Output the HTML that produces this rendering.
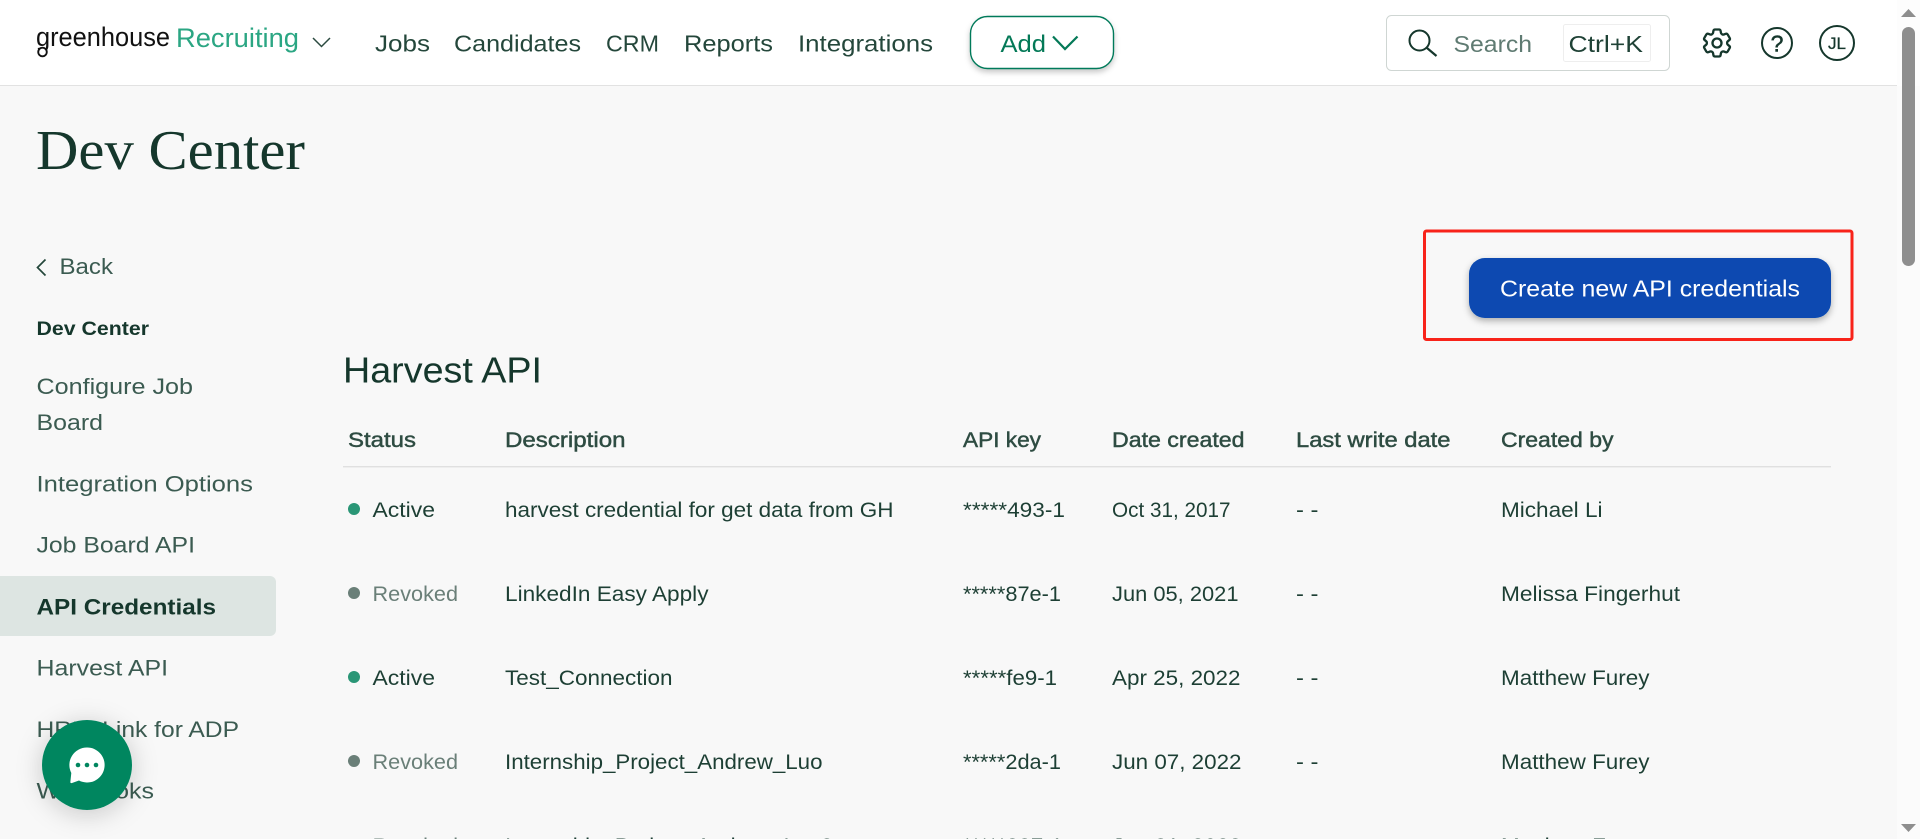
<!DOCTYPE html>
<html lang="en">
<head>
<meta charset="utf-8">
<title>Dev Center - API Credentials</title>
<style>
html,body{margin:0;padding:0;background:#f8f8f8;width:1920px;height:839px;overflow:hidden}
svg{display:block;position:absolute;left:0;top:0}
text{font-family:"Liberation Sans",sans-serif;white-space:pre}
.nav{font-size:23px;fill:#24473b}
.side{font-size:22.5px;fill:#3b5b51}
.sb{font-size:22px;fill:#15372c;font-weight:bold}
.th{font-size:21px;fill:#2e4c42;stroke:#2e4c42;stroke-width:.45px}
.td{font-size:21px;fill:#1d3f34}
.rev{font-size:21px;fill:#6a7f78}
</style>
</head>
<body>
<svg width="1920" height="839" viewBox="0 0 1920 839" xmlns="http://www.w3.org/2000/svg">
<defs>
<filter id="s1" x="-20%" y="-30%" width="140%" height="170%"><feDropShadow dx="0" dy="3" stdDeviation="3" flood-color="#000" flood-opacity=".22"/></filter>
<filter id="s2" x="-20%" y="-40%" width="140%" height="190%"><feDropShadow dx="0" dy="3" stdDeviation="3.5" flood-color="#000" flood-opacity=".3"/></filter>
<filter id="s3" x="-60%" y="-60%" width="220%" height="220%"><feDropShadow dx="0" dy="4" stdDeviation="13" flood-color="#000" flood-opacity=".2"/></filter>
</defs>

<!-- page + header -->
<rect width="1920" height="839" fill="#f8f8f8"/>
<rect width="1897" height="85" fill="#fff"/>
<rect y="85" width="1897" height="1" fill="#e2e2e2"/>

<!-- scrollbar -->
<rect x="1897" width="23" height="839" fill="#fbfbfb"/>
<rect x="1897" width="23" height="86" fill="#fdfdfd"/>
<path d="M1908.5 9 L1916 17 L1901 17 Z" fill="#8e8e8e"/>
<rect x="1902" y="27" width="13" height="239" rx="6.5" fill="#8e8e8e"/>
<path d="M1901 824 L1916 824 L1908.5 832 Z" fill="#8e8e8e"/>

<!-- logo -->
<text x="36" y="46" font-size="27" fill="#111" textLength="134" lengthAdjust="spacingAndGlyphs">greenhouse</text>
<circle cx="42.5" cy="52" r="4.3" fill="#fff" stroke="#111" stroke-width="1.9"/>
<text x="176" y="47" font-size="27" fill="#2ba683" textLength="123" lengthAdjust="spacingAndGlyphs">Recruiting</text>
<path d="M313 38 L321.5 46.5 L330 38" fill="none" stroke="#2b4a40" stroke-width="1.5"/>

<!-- nav -->
<text class="nav" x="375" y="51.5" textLength="55" lengthAdjust="spacingAndGlyphs">Jobs</text>
<text class="nav" x="454" y="51.5" textLength="127" lengthAdjust="spacingAndGlyphs">Candidates</text>
<text class="nav" x="606" y="51.5" textLength="53" lengthAdjust="spacingAndGlyphs">CRM</text>
<text class="nav" x="684" y="51.5" textLength="89" lengthAdjust="spacingAndGlyphs">Reports</text>
<text class="nav" x="798" y="51.5" textLength="135" lengthAdjust="spacingAndGlyphs">Integrations</text>

<!-- add -->
<rect x="970.5" y="16.5" width="143" height="52" rx="17" fill="#fff" stroke="#067a5a" stroke-width="1.4" filter="url(#s1)"/>
<text x="1000.5" y="52" font-size="24" fill="#047957" textLength="45.5" lengthAdjust="spacingAndGlyphs">Add</text>
<path d="M1053 36.5 L1065 49 L1077.5 36.5" fill="none" stroke="#047957" stroke-width="2.2"/>

<!-- search -->
<rect x="1386.5" y="15.5" width="283" height="55" rx="5" fill="#fff" stroke="#cfd6d3" stroke-width="1"/>
<circle cx="1419.5" cy="40.5" r="10" fill="none" stroke="#15372c" stroke-width="2"/>
<path d="M1427 48 L1436.5 56" fill="none" stroke="#15372c" stroke-width="2.2"/>
<text x="1453.5" y="52" font-size="23" fill="#5f7b72" textLength="78.5" lengthAdjust="spacingAndGlyphs">Search</text>
<rect x="1563.5" y="24.5" width="87" height="37" rx="2" fill="#fff" stroke="#eeeeee"/>
<text x="1568.5" y="52" font-size="23" fill="#1f4236" textLength="74.5" lengthAdjust="spacingAndGlyphs">Ctrl+K</text>

<!-- gear -->
<g transform="translate(1699 25) scale(1.5)" fill="none" stroke="#15372c" stroke-width="1.55">
<path d="M9.594 3.94c.09-.542.56-.94 1.11-.94h2.593c.55 0 1.02.398 1.11.94l.213 1.281c.063.374.313.686.645.87.074.04.147.083.22.127.325.196.72.257 1.075.124l1.217-.456a1.125 1.125 0 0 1 1.37.49l1.296 2.247a1.125 1.125 0 0 1-.26 1.431l-1.003.827c-.293.241-.438.613-.43.992a7.723 7.723 0 0 1 0 .255c-.008.378.137.75.43.991l1.004.827c.424.35.534.955.26 1.43l-1.298 2.247a1.125 1.125 0 0 1-1.369.491l-1.217-.456c-.355-.133-.75-.072-1.076.124a6.47 6.47 0 0 1-.22.128c-.331.183-.581.495-.644.869l-.213 1.281c-.09.543-.56.94-1.11.94h-2.594c-.55 0-1.019-.398-1.11-.94l-.213-1.281c-.062-.374-.312-.686-.644-.87a6.52 6.52 0 0 1-.22-.127c-.325-.196-.72-.257-1.076-.124l-1.217.456a1.125 1.125 0 0 1-1.369-.49l-1.297-2.247a1.125 1.125 0 0 1 .26-1.431l1.004-.827c.292-.24.437-.613.43-.991a6.932 6.932 0 0 1 0-.255c.007-.38-.138-.751-.43-.992l-1.004-.827a1.125 1.125 0 0 1-.26-1.43l1.297-2.247a1.125 1.125 0 0 1 1.37-.491l1.216.456c.356.133.751.072 1.076-.124.072-.044.146-.086.22-.128.332-.183.582-.495.644-.869l.214-1.28Z"/>
<circle cx="12" cy="12" r="3"/>
</g>

<!-- help -->
<circle cx="1777" cy="43" r="15" fill="none" stroke="#15372c" stroke-width="2"/>
<text x="1777" y="51.5" font-size="23" fill="#15372c" stroke="#15372c" stroke-width=".5" text-anchor="middle">?</text>

<!-- avatar -->
<circle cx="1837" cy="43" r="17" fill="none" stroke="#15372c" stroke-width="2"/>
<text x="1828" y="49" font-size="17" fill="#15372c" stroke="#15372c" stroke-width=".3" textLength="18" lengthAdjust="spacingAndGlyphs">JL</text>

<!-- title -->
<text x="36" y="169" font-size="56" fill="#15372c" textLength="269" lengthAdjust="spacingAndGlyphs" style="font-family:'Liberation Serif',serif">Dev Center</text>

<!-- sidebar -->
<path d="M45.5 259.5 L37.5 267.5 L45.5 275.5" fill="none" stroke="#24473b" stroke-width="1.7"/>
<text class="side" x="59.5" y="274" textLength="53.5" lengthAdjust="spacingAndGlyphs">Back</text>
<text class="sb" x="36.5" y="335" style="font-size:19px" textLength="112.5" lengthAdjust="spacingAndGlyphs">Dev Center</text>
<text class="side" x="36.5" y="394" textLength="156.5" lengthAdjust="spacingAndGlyphs">Configure Job</text>
<text class="side" x="36.5" y="430" textLength="66.5" lengthAdjust="spacingAndGlyphs">Board</text>
<text class="side" x="36.5" y="491.5" textLength="216.5" lengthAdjust="spacingAndGlyphs">Integration Options</text>
<text class="side" x="36.5" y="552.5" textLength="158.5" lengthAdjust="spacingAndGlyphs">Job Board API</text>
<path d="M0 576 H270 a6 6 0 0 1 6 6 V630 a6 6 0 0 1 -6 6 H0 Z" fill="#dde5e2"/>
<text class="sb" x="36.5" y="614.5" textLength="179.5" lengthAdjust="spacingAndGlyphs">API Credentials</text>
<text class="side" x="36.5" y="675.5" textLength="131.5" lengthAdjust="spacingAndGlyphs">Harvest API</text>
<text class="side" x="36.5" y="737" textLength="202.5" lengthAdjust="spacingAndGlyphs">HRIS Link for ADP</text>
<text class="side" x="36.5" y="798.5" textLength="117.5" lengthAdjust="spacingAndGlyphs">Webhooks</text>

<!-- CTA + annotation -->
<rect x="1469" y="258" width="362" height="60" rx="16" fill="#0749b1" filter="url(#s2)"/>
<text x="1500" y="296.5" font-size="23" fill="#fff" textLength="300" lengthAdjust="spacingAndGlyphs">Create new API credentials</text>
<rect x="1424.5" y="231" width="427.5" height="108.5" rx="2" fill="none" stroke="#f8231a" stroke-width="3"/>

<!-- heading -->
<text x="343" y="382.5" font-size="36" fill="#15372c" textLength="199" lengthAdjust="spacingAndGlyphs">Harvest API</text>

<!-- table head -->
<text class="th" x="348" y="447" textLength="68" lengthAdjust="spacingAndGlyphs">Status</text>
<text class="th" x="505" y="447" textLength="120.5" lengthAdjust="spacingAndGlyphs">Description</text>
<text class="th" x="963" y="447" textLength="78" lengthAdjust="spacingAndGlyphs">API key</text>
<text class="th" x="1112" y="447" textLength="132.5" lengthAdjust="spacingAndGlyphs">Date created</text>
<text class="th" x="1296" y="447" textLength="154.5" lengthAdjust="spacingAndGlyphs">Last write date</text>
<text class="th" x="1501" y="447" textLength="112.5" lengthAdjust="spacingAndGlyphs">Created by</text>
<rect x="343" y="466" width="1488" height="1.4" fill="#e0e0e0"/>

<!-- row 1 -->
<circle cx="354" cy="509" r="6" fill="#2a9676"/>
<text class="td" x="372.5" y="517" textLength="62.5" lengthAdjust="spacingAndGlyphs">Active</text>
<text class="td" x="505" y="517" textLength="388.5" lengthAdjust="spacingAndGlyphs">harvest credential for get data from GH</text>
<text class="td" x="963" y="517" textLength="102" lengthAdjust="spacingAndGlyphs">*****493-1</text>
<text class="td" x="1112" y="517" textLength="118.5" lengthAdjust="spacingAndGlyphs">Oct 31, 2017</text>
<text class="td" x="1296" y="517" textLength="22.5" lengthAdjust="spacingAndGlyphs">- -</text>
<text class="td" x="1501" y="517" textLength="101.5" lengthAdjust="spacingAndGlyphs">Michael Li</text>

<!-- row 2 -->
<circle cx="354" cy="593" r="6" fill="#6a7f78"/>
<text class="rev" x="372.5" y="601" textLength="85.5" lengthAdjust="spacingAndGlyphs">Revoked</text>
<text class="td" x="505" y="601" textLength="203.5" lengthAdjust="spacingAndGlyphs">LinkedIn Easy Apply</text>
<text class="td" x="963" y="601" textLength="98" lengthAdjust="spacingAndGlyphs">*****87e-1</text>
<text class="td" x="1112" y="601" textLength="126.5" lengthAdjust="spacingAndGlyphs">Jun 05, 2021</text>
<text class="td" x="1296" y="601" textLength="22.5" lengthAdjust="spacingAndGlyphs">- -</text>
<text class="td" x="1501" y="601" textLength="179" lengthAdjust="spacingAndGlyphs">Melissa Fingerhut</text>

<!-- row 3 -->
<circle cx="354" cy="677" r="6" fill="#2a9676"/>
<text class="td" x="372.5" y="685" textLength="62.5" lengthAdjust="spacingAndGlyphs">Active</text>
<text class="td" x="505" y="685" textLength="167.5" lengthAdjust="spacingAndGlyphs">Test_Connection</text>
<text class="td" x="963" y="685" textLength="94" lengthAdjust="spacingAndGlyphs">*****fe9-1</text>
<text class="td" x="1112" y="685" textLength="128.5" lengthAdjust="spacingAndGlyphs">Apr 25, 2022</text>
<text class="td" x="1296" y="685" textLength="22.5" lengthAdjust="spacingAndGlyphs">- -</text>
<text class="td" x="1501" y="685" textLength="148.5" lengthAdjust="spacingAndGlyphs">Matthew Furey</text>

<!-- row 4 -->
<circle cx="354" cy="761" r="6" fill="#6a7f78"/>
<text class="rev" x="372.5" y="769" textLength="85.5" lengthAdjust="spacingAndGlyphs">Revoked</text>
<text class="td" x="505" y="769" textLength="317.5" lengthAdjust="spacingAndGlyphs">Internship_Project_Andrew_Luo</text>
<text class="td" x="963" y="769" textLength="98" lengthAdjust="spacingAndGlyphs">*****2da-1</text>
<text class="td" x="1112" y="769" textLength="129.5" lengthAdjust="spacingAndGlyphs">Jun 07, 2022</text>
<text class="td" x="1296" y="769" textLength="22.5" lengthAdjust="spacingAndGlyphs">- -</text>
<text class="td" x="1501" y="769" textLength="148.5" lengthAdjust="spacingAndGlyphs">Matthew Furey</text>

<!-- row 5 (clipped) -->
<text class="rev" x="372.5" y="853" textLength="85.5" lengthAdjust="spacingAndGlyphs">Revoked</text>
<text class="td" x="505" y="853" textLength="328" lengthAdjust="spacingAndGlyphs">Internship_Project_Andrew_Luo2</text>
<text class="td" x="963" y="853" textLength="100" lengthAdjust="spacingAndGlyphs">*****887-1</text>
<text class="td" x="1112" y="853" textLength="129.5" lengthAdjust="spacingAndGlyphs">Jun 21, 2022</text>
<text class="td" x="1501" y="853" textLength="148.5" lengthAdjust="spacingAndGlyphs">Matthew Furey</text>

<!-- chat widget -->
<circle cx="87" cy="765" r="45" fill="#00865f" filter="url(#s3)"/>
<path d="M87 747.5 a17.5 17.5 0 1 1 -8 33 L72 783 q-2 .5 -1.6 -1.4 L71.3 773 A17.5 17.5 0 0 1 87 747.5 Z" fill="#fff"/>
<circle cx="78" cy="765" r="2.3" fill="#00865f"/>
<circle cx="87" cy="765" r="2.3" fill="#00865f"/>
<circle cx="96" cy="765" r="2.3" fill="#00865f"/>
</svg>
</body>
</html>
